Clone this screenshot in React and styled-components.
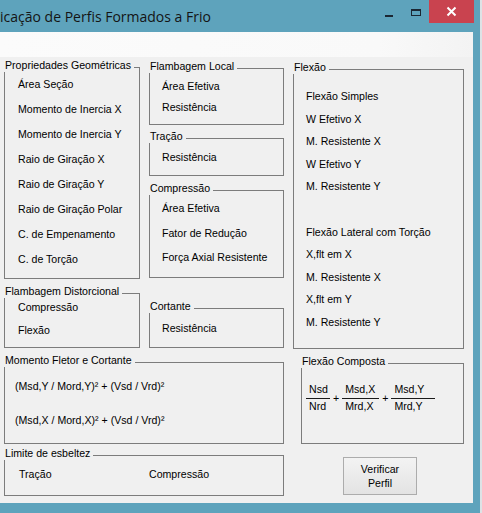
import React from 'react';
import styled, { createGlobalStyle } from 'styled-components';

const GlobalStyle = createGlobalStyle`
  html, body {
    margin: 0;
    padding: 0;
    background: #dde3e6;
  }
  body {
    font-family: "Liberation Sans", Arial, sans-serif;
    color: #000;
  }
`;

const Window = styled.div`
  box-sizing: border-box;
  width: 480px;
  height: 513px;
  padding: 0 7px 10px 0;
  background: #5ea3bc;
  display: flex;
  flex-direction: column;
  overflow: hidden;
`;

const TitleBar = styled.div`
  height: 32px;
  flex: none;
  display: flex;
  align-items: flex-start;
`;

const Title = styled.div`
  flex: 1;
  padding-top: 7px;
  font-family: "Open Sans", "Noto Sans", sans-serif;
  font-size: 14px;
  line-height: 19px;
  color: #141414;
  white-space: nowrap;
`;

const CaptionButton = styled.div`
  width: ${p => p.$w}px;
  height: ${p => p.$h || 22}px;
  background: ${p => p.$bg || 'transparent'};
  display: flex;
  align-items: center;
  justify-content: center;
  margin-right: ${p => p.$mr || 0}px;
`;

const Client = styled.div`
  flex: 1;
  background: #f0f0f0;
  display: flex;
  flex-direction: column;
`;

const MenuBand = styled.div`
  height: 25px;
  flex: none;
  background: linear-gradient(90deg, #fbfbfb 0%, #f9f9f9 80%, #f3f3f3 100%);
`;

const Content = styled.div`
  padding-left: 4px;
  display: flex;
  flex-direction: column;
  font-size: 10.6px;
`;

const Row = styled.div`
  display: flex;
  align-items: flex-start;
  gap: ${p => p.$gap || 0}px;
`;

const Column = styled.div`
  display: flex;
  flex-direction: column;
`;

const Box = styled.div`
  box-sizing: border-box;
  width: ${p => p.$w}px;
  height: ${p => p.$h}px;
  margin-top: ${p => p.$mt}px;
  border: 1px solid #7c7c7c;
  display: flex;
  flex-direction: column;
`;

const Legend = styled.div`
  align-self: flex-start;
  margin: -9px 0 0 -1px;
  padding: 0 3px 0 1px;
  background: #f0f0f0;
  line-height: 13px;
  white-space: nowrap;
`;

const Body = styled.div`
  display: ${p => (p.$grid ? 'grid' : 'flex')};
  flex-direction: column;
  grid-template-columns: 130px auto;
  padding-top: ${p => p.$pt}px;
  padding-left: ${p => p.$pl}px;
  gap: ${p => p.$gap || 0}px;
`;

const Item = styled.div`
  line-height: 13px;
  height: 13px;
  white-space: nowrap;
`;

const Formula = styled.div`
  display: flex;
  align-items: center;
`;

const Fraction = styled.div`
  width: ${p => p.$w}px;
  display: flex;
  flex-direction: column;
`;

const Term = styled.div`
  line-height: 13px;
  padding-left: 3px;
  white-space: nowrap;
`;

const Bar = styled.div`
  height: 1px;
  background: #1a1a1a;
  margin: 2px 0 1px;
`;

const Plus = styled.div`
  margin: 0 3px;
  line-height: 13px;
`;

const Button = styled.div`
  box-sizing: border-box;
  width: 74px;
  height: 38px;
  margin: 13px 0 0 59px;
  border: 1px solid #acacac;
  background: linear-gradient(#f3f3f3, #e3e3e3);
  display: flex;
  align-items: center;
  justify-content: center;
  text-align: center;
  line-height: 14px;
`;

const Group = ({ title, w, h, mt, pt, pl, gap, grid, children }) => (
  <Box $w={w} $h={h} $mt={mt}>
    <Legend>{title}</Legend>
    <Body $pt={pt} $pl={pl} $gap={gap} $grid={grid}>
      {children}
    </Body>
  </Box>
);

const list = items => items.map((t, i) => <Item key={i}>{t}</Item>);

const frac = [
  { n: 'Nsd', d: 'Nrd', w: 24 },
  { n: 'Msd,X', d: 'Mrd,X', w: 37 },
  { n: 'Msd,Y', d: 'Mrd,Y', w: 44 },
];

export default function App() {
  return (
    <>
      <GlobalStyle />
      <Window>
        <TitleBar>
          <Title>icação de Perfis Formados a Frio</Title>
          <CaptionButton $w={26}>
            <svg width="26" height="22" viewBox="0 0 26 22">
              <rect x="8" y="15" width="8" height="2" fill="#1b2733" />
            </svg>
          </CaptionButton>
          <CaptionButton $w={26}>
            <svg width="26" height="22" viewBox="0 0 26 22">
              <rect x="8.5" y="9.5" width="9" height="6" fill="none" stroke="#1b2733" strokeWidth="1" />
              <rect x="8" y="9" width="10" height="2" fill="#1b2733" />
            </svg>
          </CaptionButton>
          <CaptionButton $w={45} $h={23} $bg="#c9434f" $mr={-1}>
            <svg width="45" height="23" viewBox="0 0 45 23">
              <path d="M18.5 7.5 L26.5 15.5 M26.5 7.5 L18.5 15.5" stroke="#fff" strokeWidth="2" />
            </svg>
          </CaptionButton>
        </TitleBar>
        <Client>
          <MenuBand />
          <Content>
            <Row $gap={9}>
              <Column>
                <Group title="Propriedades Geométricas" w={136} h={212} mt={10} pt={6} pl={13} gap={12}>
                  {list([
                    'Área Seção',
                    'Momento de Inercia X',
                    'Momento de Inercia Y',
                    'Raio de Giração X',
                    'Raio de Giração Y',
                    'Raio de Giração Polar',
                    'C. de Empenamento',
                    'C. de Torção',
                  ])}
                </Group>
                <Group title="Flambagem Distorcional" w={136} h={55} mt={14} pt={3} pl={13} gap={10}>
                  {list(['Compressão', 'Flexão'])}
                </Group>
              </Column>
              <Column>
                <Group title="Flambagem Local" w={135} h={57} mt={11} pt={7} pl={12} gap={8}>
                  {list(['Área Efetiva', 'Resistência'])}
                </Group>
                <Group title="Tração" w={135} h={38} mt={13} pt={8} pl={12}>
                  {list(['Resistência'])}
                </Group>
                <Group title="Compressão" w={135} h={88} mt={14} pt={7} pl={12} gap={11.5}>
                  {list(['Área Efetiva', 'Fator de Redução', 'Força Axial Resistente'])}
                </Group>
                <Group title="Cortante" w={135} h={40} mt={30} pt={9} pl={12}>
                  {list(['Resistência'])}
                </Group>
              </Column>
              <Column>
                <Group title="Flexão" w={171} h={280} mt={12} pt={16} pl={12} gap={9.6}>
                  {list([
                    'Flexão Simples',
                    'W Efetivo X',
                    'M. Resistente X',
                    'W Efetivo Y',
                    'M. Resistente Y',
                    '',
                    'Flexão Lateral com Torção',
                    'X,flt em X',
                    'M. Resistente X',
                    'X,flt em Y',
                    'M. Resistente Y',
                  ])}
                </Group>
              </Column>
            </Row>
            <Row $gap={17}>
              <Group title="Momento Fletor e Cortante" w={280} h={82} mt={13} pt={13} pl={10} gap={21}>
                {list(['(Msd,Y / Mord,Y)² + (Vsd / Vrd)²', '(Msd,X / Mord,X)² + (Vsd / Vrd)²'])}
              </Group>
              <Group title="Flexão Composta" w={163} h={81} mt={14} pt={15} pl={4}>
                <Formula>
                  {frac.map((f, i) => (
                    <React.Fragment key={f.n}>
                      {i > 0 && <Plus>+</Plus>}
                      <Fraction $w={f.w}>
                        <Term>{f.n}</Term>
                        <Bar />
                        <Term>{f.d}</Term>
                      </Fraction>
                    </React.Fragment>
                  ))}
                </Formula>
              </Group>
            </Row>
            <Row>
              <Group title="Limite de esbeltez" w={280} h={41} mt={11} pt={8} pl={14} grid>
                {list(['Tração', 'Compressão'])}
              </Group>
              <Button>
                Verificar
                <br />
                Perfil
              </Button>
            </Row>
          </Content>
        </Client>
      </Window>
    </>
  );
}
